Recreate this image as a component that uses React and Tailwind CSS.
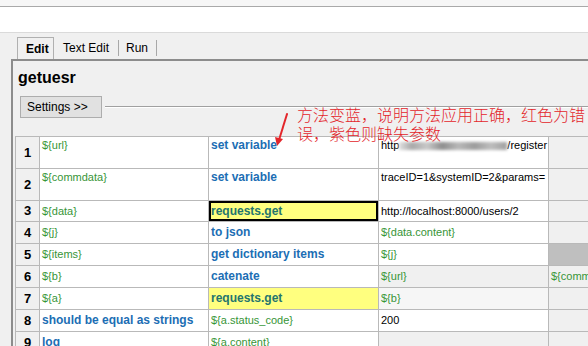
import React from "react";

const VAR = "text-[11px] text-[#379537]";
const KW = "text-[12px] font-bold text-[#1c6eb4]";
const HL = "text-[12px] font-bold text-[#24756e]";
const PLAIN = "text-[11px] text-black";
const GRAY = "bg-[#f0f0f0]";
const YELLOW = "bg-[#ffff7f]";

const rows = [
  {
    h: "h-[32px]",
    pt: "pt-0",
    cells: [
      { t: "${url}", c: VAR },
      { t: "set variable", c: KW },
      { url: true, c: PLAIN },
      { t: "", bg: GRAY },
    ],
  },
  {
    h: "h-[32px]",
    pt: "pt-0",
    cells: [
      { t: "${commdata}", c: VAR },
      { t: "set variable", c: KW },
      { t: "traceID=1&systemID=2&params=", c: PLAIN },
      { t: "", bg: GRAY },
    ],
  },
  {
    h: "h-[21px]",
    pt: "pt-[2px]",
    cells: [
      { t: "${data}", c: VAR },
      { t: "requests.get", c: HL + " shadow-[inset_0_0_0_2px_#000]", bg: YELLOW },
      { t: "http://localhost:8000/users/2", c: PLAIN },
      { t: "", bg: GRAY },
    ],
  },
  {
    h: "h-[22px]",
    pt: "pt-[2px]",
    cells: [
      { t: "${j}", c: VAR },
      { t: "to json", c: KW },
      { t: "${data.content}", c: VAR },
      { t: "", bg: GRAY },
    ],
  },
  {
    h: "h-[22px]",
    pt: "pt-[2px]",
    cells: [
      { t: "${items}", c: VAR },
      { t: "get dictionary items", c: KW },
      { t: "${j}", c: VAR },
      { t: "", bg: "bg-[#bfbfbf]" },
    ],
  },
  {
    h: "h-[22px]",
    pt: "pt-[2px]",
    cells: [
      { t: "${b}", c: VAR },
      { t: "catenate", c: KW },
      { t: "${url}", c: VAR, bg: GRAY },
      { t: "${commdata}", c: VAR, bg: GRAY },
    ],
  },
  {
    h: "h-[22px]",
    pt: "pt-[2px]",
    cells: [
      { t: "${a}", c: VAR },
      { t: "requests.get", c: HL, bg: YELLOW },
      { t: "${b}", c: VAR, bg: "bg-[#f6f6f6]" },
      { t: "", bg: GRAY },
    ],
  },
  {
    h: "h-[22px]",
    pt: "pt-[2px]",
    cells: [
      { t: "should be equal as strings", c: KW },
      { t: "${a.status_code}", c: VAR },
      { t: "200", c: PLAIN },
      { t: "", bg: GRAY },
    ],
  },
  {
    h: "h-[22px]",
    pt: "pt-[2px]",
    cells: [
      { t: "log", c: KW },
      { t: "${a.content}", c: VAR },
      { t: "", bg: GRAY },
      { t: "", bg: GRAY },
    ],
  },
];

const widths = ["w-[169px]", "w-[170px]", "w-[170px]", "w-[170px]"];

function Cell({ cell, w, pt }) {
  return (
    <div
      className={`${w} shrink-0 h-full border-r border-b border-[#b9b9b9] pl-[2px] ${pt} leading-[16px] overflow-hidden whitespace-nowrap ${cell.bg || "bg-white"} ${cell.c || ""}`}
    >
      {cell.url ? (
        <span className="flex items-center">
          <span>http</span>
          <span className="inline-block w-[108px] h-[8px] mt-[2px] blur-[1.5px] bg-[linear-gradient(90deg,#e0e0e0_0%,#a8a8a8_12%,#c8c8c8_26%,#8e8e8e_40%,#b8b8b8_55%,#9c9c9c_70%,#bdbdbd_85%,#a0a0a0_100%)]" />
          <span>/register</span>
        </span>
      ) : (
        cell.t
      )}
    </div>
  );
}

export default function App() {
  return (
    <div className="relative w-[588px] h-[346px] overflow-hidden bg-[#f0f0f0] font-['Liberation_Sans',Arial,sans-serif] text-black">
      <div className="h-[6px] bg-[#f6f6f6]" />
      <div className="h-px bg-[#a9a9a9]" />
      <div className="h-[26px] bg-white border-b border-[#dadada]" />

      {/* tabs */}
      <div className="flex items-stretch h-[26px] pt-[4px] pl-[17px] text-[12px]">
        <div className="flex items-center w-[37px] pl-[8px] border-l border-t border-r border-[#b0b0b0] bg-[#f0f0f0] font-bold">
          Edit
        </div>
        <div className="flex items-center pl-[9px] pr-[9px]">Text Edit</div>
        <span className="self-center w-px h-[16px] bg-[#a8a8a8]" />
        <div className="flex items-center pl-[7px] pr-[8px]">Run</div>
        <span className="self-center w-px h-[16px] bg-[#a8a8a8]" />
      </div>

      {/* panel */}
      <div className="ml-[11px] h-[300px] border-l-2 border-t-2 border-[#8c8c8c]">
        <div className="pl-[5px] pt-[7px] text-[16px] leading-[19px] font-bold">getuesr</div>

        <div className="flex items-center mt-[9px] ml-[7px]">
          <div className="w-[82px] h-[22px] border border-[#adadad] bg-[#e1e1e1] text-[12px] leading-[20px] pl-[6px]">
            Settings &gt;&gt;
          </div>
          <div className="flex-1 ml-[3px] h-[2px] border-t border-[#a0a0a0] border-b border-b-white" />
        </div>

        <div className="mt-[18px] ml-[2px] border-t border-[#b9b9b9]">
          {rows.map((r, i) => (
            <div key={i} className={`flex ${r.h}`}>
              <div className="w-[25px] shrink-0 h-full flex items-center justify-center border-l border-r border-b border-[#b9b9b9] bg-[#f0f0f0] text-[13px] font-bold">
                {i + 1}
              </div>
              {r.cells.map((c, j) => (
                <Cell key={j} cell={c} w={widths[j]} pt={r.pt} />
              ))}
            </div>
          ))}
        </div>
      </div>

      {/* annotation */}
      <div className="absolute left-[297px] top-[105px] text-[16px] leading-[19px] text-[#e3262b] font-['Noto_Sans_CJK_SC',sans-serif] font-light whitespace-nowrap">
        <div>方法变蓝，说明方法应用正确，红色为错</div>
        <div>误，紫色则缺失参数</div>
      </div>
      <svg className="absolute left-[270px] top-[110px]" width="24" height="40" viewBox="0 0 24 40">
        <path d="M17 4 L9 30" stroke="#e3262b" strokeWidth="2" strokeLinecap="round" fill="none" />
        <path d="M5 27 L13 29 L7 36 Z" fill="#e3262b" />
      </svg>
    </div>
  );
}
